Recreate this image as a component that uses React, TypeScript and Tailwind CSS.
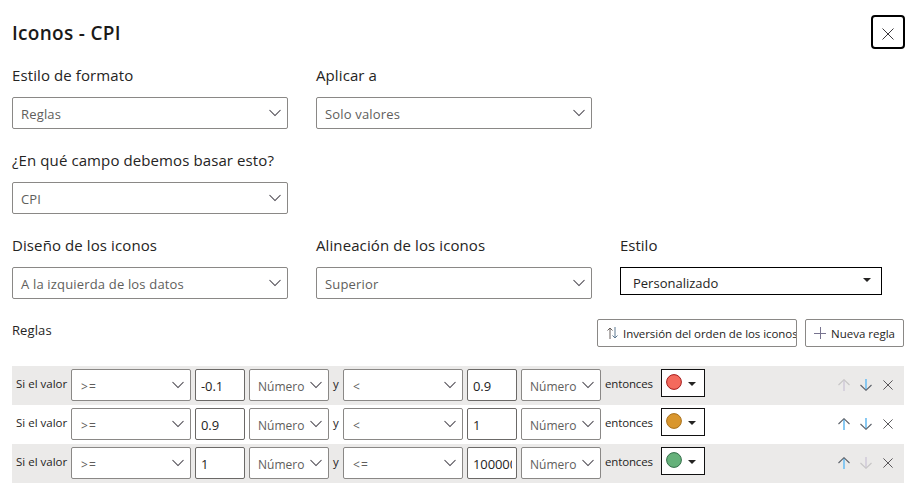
import type { ReactNode } from "react";

function Chevron() {
  return (
    <svg className="shrink-0" width="12" height="8" viewBox="0 0 12 8" fill="none" stroke="#45414a" strokeWidth="1.05">
      <path d="M0.5 1L6 6.5L11.5 1" />
    </svg>
  );
}

function Caret({ className = "" }: { className?: string }) {
  return (
    <svg className={`shrink-0 ${className}`} width="8" height="4" viewBox="0 0 8 4">
      <path d="M0 0H8L4 4Z" fill="#252423" />
    </svg>
  );
}

function Arrow({ down = false, muted = false }: { down?: boolean; muted?: boolean }) {
  return (
    <svg className="shrink-0" width="12" height="12" viewBox="0 0 12 12" fill="none">
      <g transform={down ? "matrix(1 0 0 -1 0 12)" : undefined}>
        <path d="M6 1.2V12" stroke={muted ? "#d5d0dc" : "#7cc4f2"} strokeWidth="1.8" />
        <path d="M0.5 6L6 0.7L11.5 6" stroke={muted ? "#c6c4c5" : "#5b6068"} strokeWidth="1.1" />
      </g>
    </svg>
  );
}

function Cross({ size }: { size: number }) {
  return (
    <svg className="shrink-0" width={size} height={size} viewBox="0 0 12 12" fill="none" stroke="#3b383c" strokeWidth="1">
      <path d="M0.5 0.5L11.5 11.5M11.5 0.5L0.5 11.5" />
    </svg>
  );
}

function Select({ width, text }: { width: string; text: ReactNode }) {
  return (
    <div className={`flex h-8 shrink-0 items-center justify-between rounded-[2px] border border-[#8a8886] bg-white pr-[6px] pl-2 ${width}`}>
      {text}
      <Chevron />
    </div>
  );
}

function Field({ label, value }: { label: ReactNode; value: ReactNode }) {
  return (
    <div className="w-[276px]">
      <div className="h-8 text-[15px] leading-[20px] tracking-[0.1px] text-[#252423]">{label}</div>
      <Select width="w-[276px]" text={<span className="pt-[3px] text-[13px] tracking-[0.17px] text-[#605e5c]">{value}</span>} />
    </div>
  );
}

type RuleData = {
  low: string;
  op: string;
  high: string;
  fill: string;
  stroke: string;
  first?: boolean;
  last?: boolean;
};

const rules: RuleData[] = [
  { low: "-0.1", op: "<", high: "0.9", fill: "#f46a5d", stroke: "#a51d1d", first: true },
  { low: "0.9", op: "<", high: "1", fill: "#d9962d", stroke: "#a9711c" },
  { low: "1", op: "<=", high: "1000000", fill: "#65b17a", stroke: "#356e4a", last: true },
];

function Operator({ op }: { op: string }) {
  return <Select width="w-[120px]" text={<span className="pt-[3px] pl-px text-[12px] tracking-[1.2px] text-[#605e5c]">{op}</span>} />;
}

function NumberInput({ value }: { value: string }) {
  return (
    <div className="mx-1 h-8 w-[50px] shrink-0 rounded-[2px] border border-[#6b6967] bg-white px-1">
      <div className="overflow-hidden pt-px pl-px text-[13px] leading-[30px] tracking-[-0.1px] whitespace-nowrap text-[#252423]">{value}</div>
    </div>
  );
}

function Kind() {
  return <Select width="w-20" text={<span className="pt-[3px] text-[12px] text-[#605e5c]">Número</span>} />;
}

function Rule({ rule }: { rule: RuleData }) {
  return (
    <div className={`flex h-[39px] items-start pt-[3px] text-[11.5px] text-[#252423] ${rule.first || rule.last ? "bg-[#ebeae9]" : ""}`}>
      <div className="w-[59px] shrink-0 pl-[4px] leading-[30px] whitespace-nowrap">Si el valor</div>
      <Operator op=">=" />
      <NumberInput value={rule.low} />
      <Kind />
      <div className="w-[14px] shrink-0 text-center leading-[30px]">y</div>
      <Operator op={rule.op} />
      <NumberInput value={rule.high} />
      <Kind />
      <div className="w-[60px] shrink-0 pl-[4px] leading-[30px] tracking-[-0.15px]">entonces</div>
      <div className="flex h-7 w-11 shrink-0 items-center border border-[#111] bg-white pl-[4px]">
        <svg className="mb-[2px]" width="16" height="16" viewBox="0 0 16 16">
          <circle cx="8" cy="8" r="7.4" fill={rule.fill} stroke={rule.stroke} strokeWidth="1" />
        </svg>
        <Caret className="mt-[2px] ml-[6px]" />
      </div>
      <div className="mt-[10px] mr-[10px] ml-auto flex items-center gap-[10px]">
        <Arrow muted={rule.first} />
        <Arrow down muted={rule.last} />
        <div className="flex w-3 justify-center"><Cross size={10} /></div>
      </div>
    </div>
  );
}

export default function App() {
  return (
    <div className="h-[492px] w-[912px] overflow-hidden bg-white pl-3 font-['Open_Sans','Noto_Sans',sans-serif] text-[#252423]">
      <header className="flex h-[65px] items-start justify-between pt-[15px] pr-[7px]">
        <h1 className="text-[19px] leading-[36px] font-semibold tracking-[0.3px] text-[#1b1a19]">Iconos - CPI</h1>
        <button className="flex h-[34px] w-[34px] items-center justify-center rounded-[4px] border-2 border-black bg-white pt-[3px]">
          <Cross size={12} />
        </button>
      </header>

      <div className="flex h-[85px] gap-7">
        <Field label="Estilo de formato" value="Reglas" />
        <Field label="Aplicar a" value="Solo valores" />
      </div>
      <div className="flex h-[85px]">
        <Field label="¿En qué campo debemos basar esto?" value="CPI" />
      </div>
      <div className="flex h-[84px] gap-7">
        <Field label="Diseño de los iconos" value="A la izquierda de los datos" />
        <Field label="Alineación de los iconos" value="Superior" />
        <div className="w-[262px]">
          <div className="h-8 text-[15px] leading-[20px]">Estilo</div>
          <div className="flex h-7 items-center justify-between border border-black pr-[10px] pl-3">
            <span className="pt-[5px] text-[13px]">Personalizado</span>
            <Caret className="mb-[2px]" />
          </div>
        </div>
      </div>

      <div className="flex h-[47px] items-start pr-[8px]">
        <div className="text-[13px] leading-[22px] tracking-[0.1px]">Reglas</div>
        <div className="ml-auto flex gap-2 text-[11.5px]">
          <button className="flex h-7 w-[200px] items-center overflow-hidden rounded-[2px] border border-[#8a8886] pl-[9px] whitespace-nowrap">
            <svg className="mr-[5px] shrink-0" width="11" height="12" viewBox="0 0 11 12" fill="none">
              <path d="M3 1V12M0.5 3.5L3 1L5.5 3.5" stroke="#665f5c" />
              <path d="M8 0V11M5.5 8.5L8 11L10.5 8.5" stroke="#5d7891" />
            </svg>
            <span className="pt-[2px] tracking-[-0.06px]">Inversión del orden de los iconos</span>
          </button>
          <button className="flex h-7 w-[99px] items-center rounded-[2px] border border-[#8a8886] pl-[8px] whitespace-nowrap">
            <svg className="mr-[5px] shrink-0" width="12" height="12" viewBox="0 0 12 12" fill="none" stroke="#77738f">
              <path d="M0 6.5H12M6.5 0V12" />
            </svg>
            <span className="pt-[2px]">Nueva regla</span>
          </button>
        </div>
      </div>

      <div className="w-[892px]">
        {rules.map((rule) => (
          <Rule key={rule.low} rule={rule} />
        ))}
      </div>
    </div>
  );
}
